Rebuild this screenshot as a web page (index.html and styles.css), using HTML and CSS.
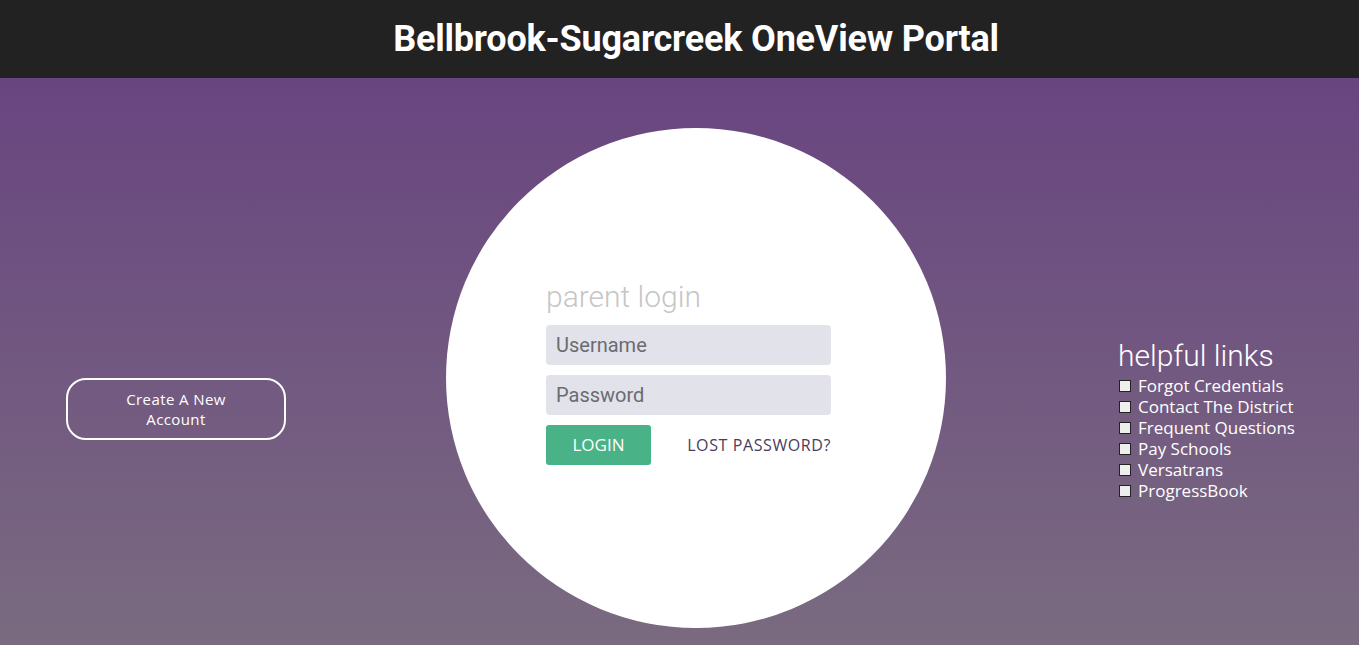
FILE: index.html
```html
<!DOCTYPE html>
<html lang="en">
<head>
    <meta charset="UTF-8">
    <meta name="viewport" content="width=device-width, initial-scale=1.0">
    <title>Bellbrook-Sugarcreek OneView Portal</title>
    <link rel="stylesheet" href="styles.css">
</head>
<body>
    <header class="top-bar">
        <h1>Bellbrook-Sugarcreek OneView Portal</h1>
    </header>

    <main class="page">
        <div class="left-col">
            <a href="#" class="create-account">Create A New<br>Account</a>
        </div>

        <div class="login-circle">
            <form class="login-form">
                <h2>parent login</h2>
                <input type="text" placeholder="Username">
                <input type="password" placeholder="Password">
                <div class="form-actions">
                    <button type="submit">LOGIN</button>
                    <a href="#" class="lost-link">LOST PASSWORD?</a>
                </div>
            </form>
        </div>

        <div class="right-col">
            <h3>helpful links</h3>
            <ul class="link-list">
                <li><span class="box"></span>Forgot Credentials</li>
                <li><span class="box"></span>Contact The District</li>
                <li><span class="box"></span>Frequent Questions</li>
                <li><span class="box"></span>Pay Schools</li>
                <li><span class="box"></span>Versatrans</li>
                <li><span class="box"></span>ProgressBook</li>
            </ul>
        </div>
    </main>
</body>
</html>
```

FILE: styles.css
```css
html, body {
    margin: 0;
    height: 100%;
}

body {
    display: flex;
    flex-direction: column;
    font-family: "Open Sans", "Liberation Sans", sans-serif;
    overflow: hidden;
}

.top-bar {
    height: 78px;
    flex-shrink: 0;
    background-color: #222222;
    display: flex;
    align-items: center;
    justify-content: center;
    padding-left: 33px;
}

.top-bar h1 {
    margin: 0;
    color: #fff;
    font-family: Roboto, sans-serif;
    font-weight: 700;
    font-size: 36px;
    letter-spacing: -0.2px;
}

.page {
    flex-grow: 1;
    display: grid;
    grid-template-columns: 446px 500px 1fr;
    background: linear-gradient(to bottom, #694580 0%, #7a6b80 100%);
}

/* left column */
.left-col {
    padding: 300px 0 0 66px;
}

.create-account {
    display: flex;
    align-items: center;
    justify-content: center;
    text-align: center;
    box-sizing: border-box;
    width: 220px;
    height: 62px;
    border: 2px solid #fff;
    border-radius: 20px;
    color: #fff;
    text-decoration: none;
    font-size: 15px;
    letter-spacing: 0.4px;
    line-height: 20px;
}

/* center circle */
.login-circle {
    margin-top: 50px;
    width: 500px;
    height: 500px;
    border-radius: 50%;
    background-color: #fff;
    box-sizing: border-box;
    padding: 150px 115px 0 100px;
}

.login-form {
    display: flex;
    flex-direction: column;
    gap: 10px;
}

.login-form h2 {
    margin: 0 0 -1px 0;
    font-family: Roboto, sans-serif;
    font-weight: 300;
    font-size: 30px;
    line-height: 38px;
    color: #c6c6c6;
}

.login-form input {
    height: 40px;
    border: none;
    border-radius: 4px;
    background-color: #e1e2ea;
    padding: 0 10px;
    font-family: Roboto, sans-serif;
    font-size: 20px;
    color: #555;
    outline: none;
}

.login-form input::placeholder {
    color: #6b6b72;
}

.form-actions {
    display: flex;
    align-items: center;
    justify-content: space-between;
}

.form-actions button {
    width: 105px;
    height: 40px;
    border: none;
    border-radius: 3px;
    background-color: #49b287;
    color: #fff;
    font-family: "Open Sans", sans-serif;
    font-size: 17px;
    line-height: 20px;
    padding-bottom: 2px;
    cursor: pointer;
}

.lost-link {
    color: #4a3d5a;
    text-decoration: none;
    font-size: 16px;
    letter-spacing: 0.6px;
}

/* right column */
.right-col {
    padding: 258px 0 0 172px;
    color: #fff;
}

.right-col h3 {
    margin: 0;
    font-family: Roboto, sans-serif;
    font-weight: 300;
    font-size: 30px;
    line-height: 40px;
}

.link-list {
    list-style: none;
    margin: -1px 0 0 0;
    padding: 0;
}

.link-list li {
    display: flex;
    align-items: center;
    height: 21px;
    font-size: 17px;
}

.box {
    width: 10px;
    height: 10px;
    border: 1px solid #222;
    background-color: #eeeeee;
    margin: 0 7px 0 1px;
}
```
